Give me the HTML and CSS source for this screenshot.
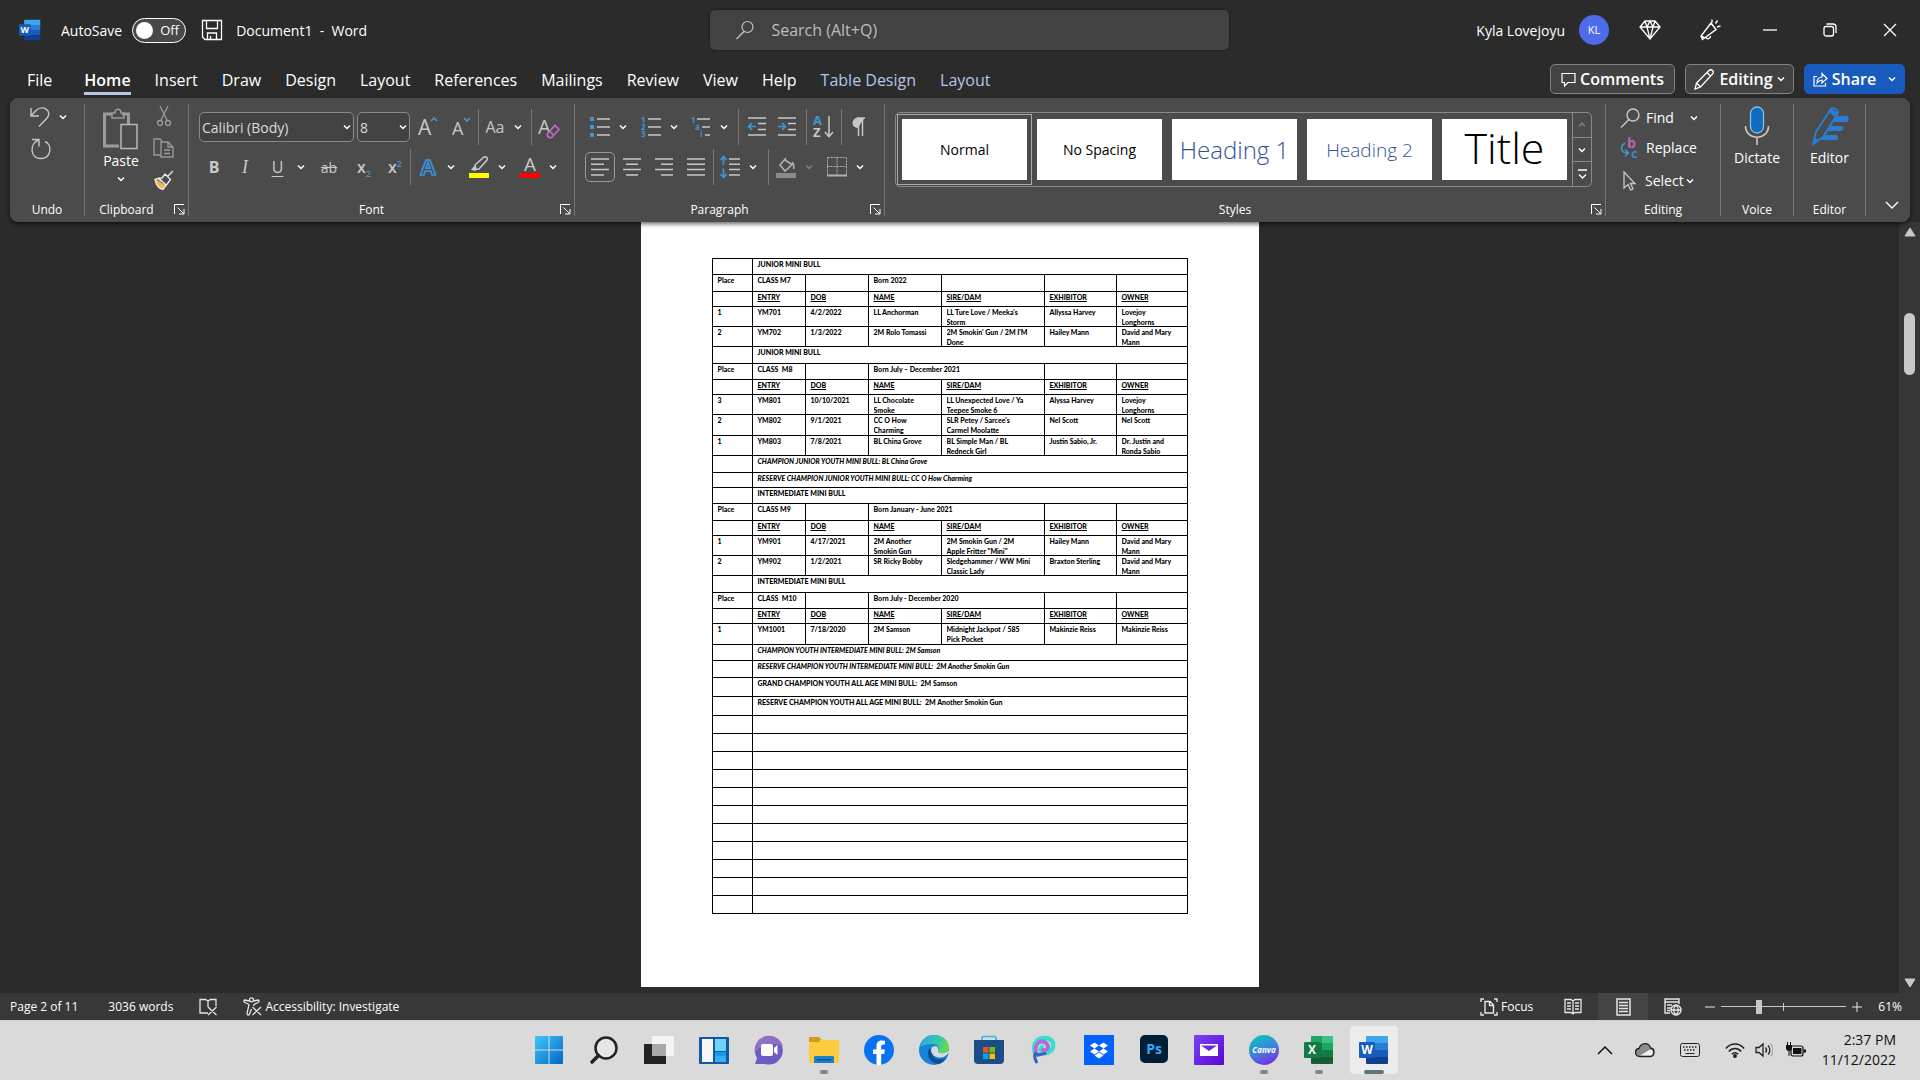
FILE: index.html
```html
<!DOCTYPE html>
<html lang="en">
<head>
    <meta charset="UTF-8">
    <meta name="viewport" content="width=device-width, initial-scale=1.0">
    <title>Document1 - Word</title>
    <link rel="stylesheet" href="styles.css">
</head>
<body>

    <!-- shared icons -->
    <svg class="defs" width="0" height="0" aria-hidden="true">
        <symbol id="chev" viewBox="0 0 8 8"><path d="M1 2.5l3 3 3-3" fill="none" stroke="currentColor" stroke-width="1.5"/></symbol>
        <symbol id="launch" viewBox="0 0 11 11"><path d="M.5 10V.5H10M3.5 3.5l6 6M10 5v5H5" fill="none" stroke="currentColor"/></symbol>
        <symbol id="wordlogo" viewBox="0 0 30 30">
            <path d="M8 1h20a1 1 0 0 1 1 1v7H7V2a1 1 0 0 1 1-1z" fill="#41a5ee"/>
            <path d="M7 8h22v7H7z" fill="#2b7cd3"/>
            <path d="M7 15h22v7H7z" fill="#185abd"/>
            <path d="M7 22h22v6a1 1 0 0 1-1 1H8a1 1 0 0 1-1-1z" fill="#103f91"/>
            <rect y="7" width="16" height="16" rx="1" fill="#185abd"/>
            <text x="8" y="19" text-anchor="middle" font-size="12" font-weight="bold" fill="#fff">W</text>
        </symbol>
    </svg>

    <header class="titlebar">
        <div class="title-left">
            <svg class="app-icon" width="22" height="22"><use href="#wordlogo"/></svg>
            <label for="autosave">AutoSave</label>
            <span class="toggle">
                <input type="checkbox" id="autosave">
                <span class="toggle-text">Off</span>
            </span>
            <button class="plain save" aria-label="Save">
                <svg width="22" height="22" viewBox="0 0 22 22" fill="none" stroke="#fff" stroke-width="1.300"><path d="M1.500 1.500h19v19H4l-2.500-2.500zM5.500 1.500v8h11v-8M6.500 20.500v-6.500h9v6.500M9.500 20v-3"/></svg>
            </button>
            <span class="doc-name">Document1&nbsp; -&nbsp; Word</span>
        </div>
        <label class="search">
            <svg width="18" height="20" viewBox="0 0 18 20" fill="none" stroke="#c4c4c4" stroke-width="1.200"><circle cx="11.500" cy="7" r="5.500"/><path d="M8 11.500L.5 19"/></svg>
            <input type="search" placeholder="Search (Alt+Q)" aria-label="Search">
        </label>
        <div class="title-right">
            <span class="user">Kyla Lovejoyu</span>
            <span class="avatar">KL</span>
            <button class="win" aria-label="Premium"><svg width="22" height="20" viewBox="0 0 22 20" fill="none" stroke="#fff" stroke-width="1.300"><path d="M6 1h10l5 6-10 12L1 7zM1 7h20M6 1l2 6 3 12 3-12 2-6M8 7l3-6 3 6"/></svg></button>
            <button class="win" aria-label="What's new"><svg width="22" height="22" viewBox="0 0 22 22" fill="none" stroke="#fff" stroke-width="1.400"><path d="M12 4L2 17l1.500 3.500L17 10.500zM2 17l4 2M7 18.500c1 2 4.500 1.500 4.500-1.500M13 3.500V.5M16.500 4.500l2-3M18 8l3.500-1"/></svg></button>
            <button class="win" aria-label="Minimize"><svg width="14" height="14"><path d="M0 7h14" stroke="#fff" stroke-width="1.300"/></svg></button>
            <button class="win" aria-label="Restore"><svg width="14" height="14" viewBox="0 0 14 14" fill="none" stroke="#fff" stroke-width="1.300"><rect x="1" y="3.500" width="9.500" height="9.500" rx="2"/><path d="M3.500 1h6.500a3 3 0 0 1 3 3v6"/></svg></button>
            <button class="win" aria-label="Close"><svg width="14" height="14"><path d="M1 1l12 12M13 1L1 13" stroke="#fff" stroke-width="1.300"/></svg></button>
        </div>
    </header>

    <nav class="tabs">
        <a href="#file" class="file">File</a>
        <a href="#home" class="active">Home</a>
        <a href="#insert">Insert</a>
        <a href="#draw">Draw</a>
        <a href="#design">Design</a>
        <a href="#layout">Layout</a>
        <a href="#references">References</a>
        <a href="#mailings">Mailings</a>
        <a href="#review">Review</a>
        <a href="#view">View</a>
        <a href="#help">Help</a>
        <a href="#table-design" class="context">Table Design</a>
        <a href="#table-layout" class="context">Layout</a>
        <div class="tab-buttons">
            <button class="tab-btn comments"><svg width="15" height="15" viewBox="0 0 15 15" fill="none" stroke="#fff" stroke-width="1.200"><path d="M1 1.500h13v9H7L3.500 14v-3.500H1z"/></svg>Comments</button>
            <button class="tab-btn editing"><svg width="21" height="21" viewBox="0 0 21 21" fill="none" stroke="#fff" stroke-width="1.300"><path d="M1 20l1.500-6L15 1.500c1-1 2.500-1 3.500 0s1 2.500 0 3.500L6.500 18zM13 3.500l4 4M2.500 14l4 4"/></svg>Editing<svg width="8" height="8"><use href="#chev"/></svg></button>
            <button class="tab-btn share"><svg width="15" height="15" viewBox="0 0 15 15" fill="none" stroke="#fff" stroke-width="1.200"><path d="M4 4.500H1v9.500h11.500V11M4 11c0-4 2-6 5-6V1.500l5 5-5 4.500V8C7 8 5.500 9 4 11z"/></svg>Share<svg class="share-chev" width="8" height="8"><use href="#chev"/></svg></button>
        </div>
    </nav>

    <section class="ribbon">
        <div class="group undo-group">
            <div class="group-body undo-body">
                <button class="split" aria-label="Undo"><svg width="20" height="20" viewBox="0 0 20 20" fill="none" stroke="#c8c8c8" stroke-width="1.400"><path d="M1 1v8h8M1.500 8.500L6 3.500c7-6 16 0 11.500 7L9 19.500"/></svg><svg width="8" height="8"><use href="#chev"/></svg></button>
                <button class="ib" aria-label="Redo"><svg width="22" height="22" viewBox="0 0 22 22" fill="none" stroke="#c8c8c8" stroke-width="1.400"><path d="M2 1.500h7v7M8.500 2C-1 6 0 20.500 11 20.500c10 0 12-13.500 4-17"/></svg></button>
            </div>
            <div class="group-label"><span>Undo</span></div>
        </div>

        <div class="group clip-group">
            <div class="group-body clip-body">
                <button class="paste">
                    <svg width="36" height="42" viewBox="0 0 36 42" fill="none" stroke="#9b9b9b" stroke-width="2"><path d="M9 6H1.500v32H16M19 6h6.500v10" stroke-width="3"/><path d="M9 10V5h3c0-5 6-5 6 0h3v5z" stroke-width="1.500"/><path d="M18 16.500h16v24H18z" stroke="#b8b8b8" stroke-width="1.500"/></svg>
                    Paste
                    <svg width="8" height="8"><use href="#chev"/></svg>
                </button>
                <div class="clip-side">
                    <button class="ib" aria-label="Cut"><svg width="16" height="22" viewBox="0 0 16 22" fill="none" stroke="#9b9b9b" stroke-width="1.300"><path d="M4 1l7.500 15M12 1L4.500 16"/><circle cx="4" cy="18" r="2.500"/><circle cx="12" cy="18" r="2.500"/></svg></button>
                    <button class="ib" aria-label="Copy"><svg width="21" height="20" viewBox="0 0 21 20" fill="none" stroke="#9b9b9b" stroke-width="1.300"><path d="M8 17H1V1h6l2 2M8 4h7l5 5v10H8zM15 4v5h5M11 12h6M11 15.500h6"/></svg></button>
                    <button class="ib" aria-label="Format Painter"><svg width="20" height="20" viewBox="0 0 20 20" fill="none"><path d="M2 9l10 7-3 3.500C5 18 2 14 1 10z" fill="#f0b64e"/><path d="M19 1l-6 6M11 4l5.500 5.500-4 5.500L4 8.500 8 8zM1 9.500l4-1.500 7 7.500-3 4C5 18.500 2 14 1 9.500z" stroke="#e6e6e6" stroke-width="1.400"/></svg></button>
                </div>
            </div>
            <div class="group-label"><span>Clipboard</span><button class="plain launcher" aria-label="Clipboard options"><svg width="11" height="11"><use href="#launch"/></svg></button></div>
        </div>

        <div class="group font-group">
            <div class="group-body rows">
                <div class="tool-row font-top">
                    <span class="combo"><select aria-label="Font"><option>Calibri (Body)</option></select><svg width="8" height="8"><use href="#chev"/></svg></span>
                    <span class="combo"><select aria-label="Font size"><option>8</option></select><svg width="8" height="8"><use href="#chev"/></svg></span>
                    <button class="ib" aria-label="Grow font"><svg width="20" height="24" viewBox="0 0 20 24"><text x="0" y="20" font-size="21" fill="#c8c8c8">A</text><path d="M13 6l3-3 3 3" fill="none" stroke="#4a9ad4" stroke-width="1.500"/></svg></button>
                    <button class="ib" aria-label="Shrink font"><svg width="18" height="24" viewBox="0 0 18 24"><text x="0" y="20" font-size="18" fill="#c8c8c8">A</text><path d="M12 3l3 3 3-3" fill="none" stroke="#4a9ad4" stroke-width="1.500"/></svg></button>
                    <i class="sep"></i>
                    <button class="split" aria-label="Change case"><span class="glyph w20">Aa</span><svg width="8" height="8"><use href="#chev"/></svg></button>
                    <i class="sep"></i>
                    <button class="ib" aria-label="Clear formatting"><svg width="22" height="26" viewBox="0 0 22 26"><text x="0" y="20" font-size="20" fill="#c8c8c8">A</text><path d="M9.500 19.500l7.500-8 4 4-7.500 8c-2 1-5-1.500-4-4zM11.500 17l4 4" fill="#4b4b4b" stroke="#c669c6" stroke-width="1.600"/></svg></button>
                </div>
                <div class="tool-row font-bottom">
                    <button class="ib glyph bold">B</button>
                    <button class="ib glyph ital">I</button>
                    <button class="split"><span class="glyph under w20">U</span><svg width="8" height="8"><use href="#chev"/></svg></button>
                    <button class="ib glyph strike">ab</button>
                    <button class="ib glyph script">x<sub>2</sub></button>
                    <button class="ib glyph script">x<sup>2</sup></button>
                    <i class="sep"></i>
                    <button class="split" aria-label="Text effects"><svg width="20" height="24" viewBox="0 0 20 24"><text x="10" y="20" text-anchor="middle" font-size="22" font-weight="bold" fill="#4b4b4b" stroke="#3d8fd6" stroke-width="1.700">A</text></svg><svg width="8" height="8"><use href="#chev"/></svg></button>
                    <button class="split" aria-label="Highlight"><svg width="20" height="22" viewBox="0 0 20 22"><path d="M2 14l3-4 3 3-2 2z" fill="#c8c8c8"/><path d="M6 9l9-8c2-1 4 1 3 3l-8 9-3 .5z" fill="none" stroke="#c8c8c8" stroke-width="1.500"/><path d="M0 17h20v5H0z" fill="#ff0"/></svg><svg width="8" height="8"><use href="#chev"/></svg></button>
                    <button class="split" aria-label="Font color"><svg width="20" height="22" viewBox="0 0 20 22"><text x="10" y="14.500" text-anchor="middle" font-size="19" fill="#c8c8c8">A</text><path d="M0 17h20v5H0z" fill="#f00"/></svg><svg width="8" height="8"><use href="#chev"/></svg></button>
                </div>
            </div>
            <div class="group-label"><span>Font</span><button class="plain launcher" aria-label="Font options"><svg width="11" height="11"><use href="#launch"/></svg></button></div>
        </div>

        <div class="group para-group">
            <div class="group-body rows">
                <div class="tool-row para-top">
                    <button class="split" aria-label="Bullets"><svg width="20" height="20" viewBox="0 0 20 20"><path d="M0 0h4v4H0zM0 8h4v4H0zM0 16h4v4H0z" fill="#3f97d3"/><path d="M7 2h13M7 10h13M7 18h13" stroke="#c8c8c8" stroke-width="1.500"/></svg><svg width="8" height="8"><use href="#chev"/></svg></button>
                    <button class="split" aria-label="Numbering"><svg width="20" height="20" viewBox="0 0 20 20"><g font-size="8" font-weight="bold" fill="#3f97d3"><text y="6">1</text><text y="13">2</text><text y="20">3</text></g><path d="M7 2h13M7 10h13M7 18h13" stroke="#c8c8c8" stroke-width="1.500"/></svg><svg width="8" height="8"><use href="#chev"/></svg></button>
                    <button class="split" aria-label="Multilevel list"><svg width="20" height="20" viewBox="0 0 20 20"><g font-size="8" font-weight="bold" fill="#3f97d3"><text y="6">1</text><text x="4" y="13">a</text><text x="9" y="20">i</text></g><path d="M6 2h13M11 10h8M14 18h5" stroke="#c8c8c8" stroke-width="1.500"/></svg><svg width="8" height="8"><use href="#chev"/></svg></button>
                    <i class="sep"></i>
                    <button class="ib" aria-label="Decrease indent"><svg width="20" height="20" viewBox="0 0 20 20" fill="none"><path d="M1 1h18M11 6.500h8M11 12.500h8M1 18h18" stroke="#c8c8c8" stroke-width="1.500"/><path d="M9 9.500H1.500M5 6L1.500 9.500 5 13" stroke="#3f97d3" stroke-width="1.600"/></svg></button>
                    <button class="ib" aria-label="Increase indent"><svg width="20" height="20" viewBox="0 0 20 20" fill="none"><path d="M1 1h18M11 6.500h8M11 12.500h8M1 18h18" stroke="#c8c8c8" stroke-width="1.500"/><path d="M1 9.500h7.500M5 6l3.500 3.500L5 13" stroke="#3f97d3" stroke-width="1.600"/></svg></button>
                    <i class="sep"></i>
                    <button class="ib" aria-label="Sort"><svg width="21" height="26" viewBox="0 0 21 26"><text x="0" y="11" font-size="13" font-weight="bold" fill="#3f97d3">A</text><text x="0" y="23" font-size="13" font-weight="bold" fill="#c8c8c8">Z</text><path d="M16 2v20M12 18l4 4.500 4-4.500" fill="none" stroke="#c8c8c8" stroke-width="1.500"/></svg></button>
                    <i class="sep"></i>
                    <button class="ib" aria-label="Show marks"><svg width="14" height="20" viewBox="0 0 14 20"><path d="M13.500 1H6.500a5 5 0 0 0 0 10" fill="#c8c8c8"/><path d="M5.500 1H14M7.500 1v18M11.500 1v18" stroke="#c8c8c8" stroke-width="1.500"/></svg></button>
                </div>
                <div class="tool-row para-bottom">
                    <button class="ib on" aria-label="Align left"><svg width="20" height="20" viewBox="0 0 20 20"><path d="M1 2h18M1 7.300h13M1 12.600h18M1 18h13" stroke="#c8c8c8" stroke-width="1.500"/></svg></button>
                    <button class="ib" aria-label="Center"><svg width="20" height="20" viewBox="0 0 20 20"><path d="M1 2h18M4 7.300h12M1 12.600h18M4 18h12" stroke="#c8c8c8" stroke-width="1.500"/></svg></button>
                    <button class="ib" aria-label="Align right"><svg width="20" height="20" viewBox="0 0 20 20"><path d="M1 2h18M7 7.300h12M1 12.600h18M7 18h12" stroke="#c8c8c8" stroke-width="1.500"/></svg></button>
                    <button class="ib" aria-label="Justify"><svg width="20" height="20" viewBox="0 0 20 20"><path d="M1 2h18M1 7.300h18M1 12.600h18M1 18h18" stroke="#c8c8c8" stroke-width="1.500"/></svg></button>
                    <i class="sep"></i>
                    <button class="split" aria-label="Line spacing"><svg width="20" height="24" viewBox="0 0 20 24" fill="none"><path d="M9 4h11M9 9.300h11M9 14.600h11M9 20h11" stroke="#c8c8c8" stroke-width="1.500"/><path d="M3.500 1.500V10M.5 5l3-3.500 3 3.500M3.500 13.500V22M.5 19l3 3.500 3-3.500" stroke="#3f97d3" stroke-width="1.600"/></svg><svg width="8" height="8"><use href="#chev"/></svg></button>
                    <i class="sep"></i>
                    <button class="split dim" aria-label="Shading"><svg width="20" height="22" viewBox="0 0 20 22"><path d="M10 2L4 9l5 6 7-6.500L9 4M16 6c2 2 2 5 1.500 7" fill="none" stroke="#b0b0b0" stroke-width="1.600"/><path d="M0 17h20v5H0z" fill="#8a8a8a"/></svg><svg width="8" height="8"><use href="#chev"/></svg></button>
                    <button class="split" aria-label="Borders"><svg width="20" height="20" viewBox="0 0 20 20" fill="none" stroke="#b0b0b0"><path d="M.5 .5h19M.5 9.500h19M.5 .5V18M10 .5V18M19.500 .5V18" stroke-dasharray="2 1"/><path d="M0 18.500h20" stroke-width="2"/></svg><svg width="8" height="8"><use href="#chev"/></svg></button>
                </div>
            </div>
            <div class="group-label"><span>Paragraph</span><button class="plain launcher" aria-label="Paragraph options"><svg width="11" height="11"><use href="#launch"/></svg></button></div>
        </div>

        <div class="group styles-group">
            <div class="group-body">
                <div class="gallery">
                    <button class="tile selected">Normal</button>
                    <button class="tile">No Spacing</button>
                    <button class="tile h1">Heading 1</button>
                    <button class="tile h2">Heading 2</button>
                    <button class="tile big">Title</button>
                    <div class="gallery-nav">
                        <button class="plain dim flip" aria-label="Previous styles"><svg width="8" height="8"><use href="#chev"/></svg></button>
                        <button class="plain" aria-label="Next styles"><svg width="8" height="8"><use href="#chev"/></svg></button>
                        <button class="plain" aria-label="More styles"><svg width="9" height="11" viewBox="0 0 9 11" fill="none" stroke="#fff" stroke-width="1.300"><path d="M0 1h9M1 5.500L4.500 9 8 5.500"/></svg></button>
                    </div>
                </div>
            </div>
            <div class="group-label"><span>Styles</span><button class="plain launcher" aria-label="Styles options"><svg width="11" height="11"><use href="#launch"/></svg></button></div>
        </div>

        <div class="group edit-group">
            <div class="group-body edit-body">
                <button class="edit-btn find"><svg width="20" height="20" viewBox="0 0 20 20" fill="none" stroke="#c8c8c8" stroke-width="1.400"><circle cx="13" cy="7" r="6"/><path d="M9 11.500L1 19.500"/></svg>Find<svg width="8" height="8"><use href="#chev"/></svg></button>
                <button class="edit-btn"><svg width="20" height="24" viewBox="0 0 20 24"><text x="7" y="12" font-size="14" font-weight="bold" fill="#b565b5">b</text><text x="11" y="22" font-size="13" font-weight="bold" fill="#3f86c0">c</text><path d="M5 7C0 10 0 17 8 17M5 13.500l3.500 3.500L5 20.500" fill="none" stroke="#3f97d3" stroke-width="1.600"/></svg>Replace</button>
                <button class="edit-btn select"><svg width="20" height="20" viewBox="0 0 20 20" fill="none" stroke="#c8c8c8" stroke-width="1.300"><path d="M4 1v16l4-3.500 2.500 5.500 2.500-1-2.500-5.500H15z"/></svg>Select<svg width="8" height="8"><use href="#chev"/></svg></button>
            </div>
            <div class="group-label"><span>Editing</span></div>
        </div>

        <div class="group voice-group">
            <div class="group-body">
                <button class="big-btn"><svg width="26" height="40" viewBox="0 0 26 40" fill="none"><rect x="6.500" y="1" width="13" height="26" rx="6.500" fill="#0f6cbd" stroke="#83bfee" stroke-width="1.300"/><path d="M1.500 20c0 15 23 15 23 0M13 32v7" stroke="#d0c8c0" stroke-width="1.600"/></svg>Dictate</button>
            </div>
            <div class="group-label"><span>Voice</span></div>
        </div>

        <div class="group editor-group">
            <div class="group-body">
                <button class="big-btn"><svg width="38" height="40" viewBox="0 0 38 40" fill="none"><path d="M22 10h13.500c3 0 3 6 0 6H19zM18 20h12c3 0 3 5 0 5H14zM13 29h12c3 0 3 5 0 5H6z" fill="#2b7cd3"/><path d="M2 38l3-12L20 3c2-2 8 1 7 4L12 31z" fill="#4b4b4b" stroke="#2b7cd3" stroke-width="2"/><path d="M18 6l6 5 3-4-7-4zM2 38l1.500-7 4 4z" fill="#2b7cd3"/></svg>Editor</button>
            </div>
            <div class="group-label"><span>Editor</span></div>
        </div>

        <button class="plain collapse" aria-label="Collapse ribbon"><svg width="14" height="14" viewBox="0 0 14 14"><path d="M1 4l6 6 6-6" fill="none" stroke="#fff" stroke-width="1.400"/></svg></button>
    </section>

    <main class="workspace">
        <div class="canvas">
            <article class="page">
                <table class="results">
                    <colgroup><col class="c-place"><col class="c-entry"><col class="c-dob"><col class="c-name"><col class="c-sire"><col class="c-exhibitor"><col class="c-owner"></colgroup>
                    <tbody>
                        <tr class="champ"><td></td><td colspan="6">JUNIOR MINI BULL</td></tr>
                        <tr class="class"><td>Place</td><td>CLASS M7</td><td></td><td>Born 2022</td><td></td><td></td><td></td></tr>
                        <tr class="cols"><td></td><th>ENTRY</th><th>DOB</th><th>NAME</th><th>SIRE/DAM</th><th>EXHIBITOR</th><th>OWNER</th></tr>
                        <tr class="entry"><td>1</td><td>YM701</td><td>4/2/2022</td><td>LL Anchorman</td><td><div>LL Ture Love / Meeka's<br>Storm</div></td><td>Allyssa Harvey</td><td><div>Lovejoy<br>Longhorns</div></td></tr>
                        <tr class="entry"><td>2</td><td>YM702</td><td>1/3/2022</td><td>2M Rolo Tomassi</td><td><div>2M Smokin' Gun / 2M I'M<br>Done</div></td><td>Hailey Mann</td><td><div>David and Mary<br>Mann</div></td></tr>
                        <tr class="class"><td></td><td colspan="6">JUNIOR MINI BULL</td></tr>
                        <tr class="champ"><td>Place</td><td>CLASS&nbsp; M8</td><td></td><td colspan="2">Born July – December 2021</td><td></td><td></td></tr>
                        <tr class="cols"><td></td><th>ENTRY</th><th>DOB</th><th>NAME</th><th>SIRE/DAM</th><th>EXHIBITOR</th><th>OWNER</th></tr>
                        <tr class="entry"><td>3</td><td>YM801</td><td>10/10/2021</td><td><div>LL Chocolate<br>Smoke</div></td><td><div>LL Unexpected Love / Ya<br>Teepee Smoke 6</div></td><td>Alyssa Harvey</td><td><div>Lovejoy<br>Longhorns</div></td></tr>
                        <tr class="entry tall"><td>2</td><td>YM802</td><td>9/1/2021</td><td><div>CC O How<br>Charming</div></td><td><div>SLR Petey / Sarcee's<br>Carmel Moolatte</div></td><td>Nel Scott</td><td>Nel Scott</td></tr>
                        <tr class="entry"><td>1</td><td>YM803</td><td>7/8/2021</td><td>BL China Grove</td><td><div>BL Simple Man / BL<br>Redneck Girl</div></td><td>Justin Sabio, Jr.</td><td><div>Dr. Justin and<br>Ronda Sabio</div></td></tr>
                        <tr class="class italic"><td></td><td colspan="6">CHAMPION JUNIOR YOUTH MINI BULL: BL China Grove</td></tr>
                        <tr class="cols italic"><td></td><td colspan="6">RESERVE CHAMPION JUNIOR YOUTH MINI BULL: CC O How Charming</td></tr>
                        <tr class="champ"><td></td><td colspan="6">INTERMEDIATE MINI BULL</td></tr>
                        <tr class="class"><td>Place</td><td>CLASS M9</td><td></td><td colspan="2">Born January - June 2021</td><td></td><td></td></tr>
                        <tr class="cols"><td></td><th>ENTRY</th><th>DOB</th><th>NAME</th><th>SIRE/DAM</th><th>EXHIBITOR</th><th>OWNER</th></tr>
                        <tr class="entry"><td>1</td><td>YM901</td><td>4/17/2021</td><td><div>2M Another<br>Smokin Gun</div></td><td><div>2M Smokin Gun / 2M<br>Apple Fritter "Mini"</div></td><td>Hailey Mann</td><td><div>David and Mary<br>Mann</div></td></tr>
                        <tr class="entry"><td>2</td><td>YM902</td><td>1/2/2021</td><td>SR Ricky Bobby</td><td><div>Sledgehammer / WW Mini<br>Classic Lady</div></td><td>Braxton Sterling</td><td><div>David and Mary<br>Mann</div></td></tr>
                        <tr class="class"><td></td><td colspan="6">INTERMEDIATE MINI BULL</td></tr>
                        <tr class="champ"><td>Place</td><td>CLASS&nbsp; M10</td><td></td><td colspan="2">Born July - December 2020</td><td></td><td></td></tr>
                        <tr class="cols"><td></td><th>ENTRY</th><th>DOB</th><th>NAME</th><th>SIRE/DAM</th><th>EXHIBITOR</th><th>OWNER</th></tr>
                        <tr class="entry tall"><td>1</td><td>YM1001</td><td>7/18/2020</td><td>2M Samson</td><td><div>Midnight Jackpot / 585<br>Pick Pocket</div></td><td>Makinzie Reiss</td><td>Makinzie Reiss</td></tr>
                        <tr class="champ italic"><td></td><td colspan="6">CHAMPION YOUTH INTERMEDIATE MINI BULL: 2M Samson</td></tr>
                        <tr class="class italic"><td></td><td colspan="6">RESERVE CHAMPION YOUTH INTERMEDIATE MINI BULL:&nbsp; 2M Another Smokin Gun</td></tr>
                        <tr class="grand"><td></td><td colspan="6">GRAND CHAMPION YOUTH ALL AGE MINI BULL:&nbsp; 2M Samson</td></tr>
                        <tr class="grand"><td></td><td colspan="6">RESERVE CHAMPION YOUTH ALL AGE MINI BULL:&nbsp; 2M Another Smokin Gun</td></tr>
                        <tr class="blank"><td></td><td colspan="6"></td></tr>
                        <tr class="blank"><td></td><td colspan="6"></td></tr>
                        <tr class="blank"><td></td><td colspan="6"></td></tr>
                        <tr class="blank"><td></td><td colspan="6"></td></tr>
                        <tr class="blank"><td></td><td colspan="6"></td></tr>
                        <tr class="blank"><td></td><td colspan="6"></td></tr>
                        <tr class="blank"><td></td><td colspan="6"></td></tr>
                        <tr class="blank"><td></td><td colspan="6"></td></tr>
                        <tr class="blank"><td></td><td colspan="6"></td></tr>
                        <tr class="blank"><td></td><td colspan="6"></td></tr>
                        <tr class="blank"><td></td><td colspan="6"></td></tr>
                    </tbody>
                </table>
            </article>
        </div>
        <div class="scrollbar">
            <svg width="12" height="10"><path d="M6 1l5 8H1z" fill="#c8c8c8" stroke="#c8c8c8"/></svg>
            <div class="thumb"></div>
            <svg width="12" height="10"><path d="M6 9l5-8H1z" fill="#c8c8c8" stroke="#c8c8c8"/></svg>
        </div>
    </main>

    <footer class="status">
        <span>Page 2 of 11</span>
        <span class="words">3036 words</span>
        <button class="plain proof" aria-label="Proofing"><svg width="18" height="18" viewBox="0 0 18 18" fill="none" stroke="#e6e6e6" stroke-width="1.300"><path d="M9 15H1V1.500h5.500L9 3l2.500-1.500H17V8M9 3v6M9 9l8.500 8M17.500 9L9 17"/></svg></button>
        <button class="plain access"><svg width="19" height="19" viewBox="0 0 19 19" fill="none" stroke="#e6e6e6" stroke-width="1.300"><circle cx="8.500" cy="2.800" r="2"/><path d="M6 4L2 3C.5 3 .5 5 2 5.500l4 2-2 9c0 2 2 2 2.500.5L8.500 12M11 4l4-1c1.500 0 1.500 2 0 2.500l-4 2V9M9.500 10l8.500 8M18 10l-8.500 8"/></svg>Accessibility: Investigate</button>
        <button class="plain focus"><svg width="18" height="18" viewBox="0 0 18 18" fill="none" stroke="#e6e6e6" stroke-width="1.400"><path d="M4 1H1v3M14 1h3v3M4 17H1v-3M14 17h3v-3M5 3.500h5l3.500 3.500v8H5zM9.500 4v3.500h4"/></svg>Focus</button>
        <button class="plain view-btn" aria-label="Read mode"><svg width="18" height="17" viewBox="0 0 18 17" fill="none" stroke="#e6e6e6" stroke-width="1.300"><path d="M9 3L7 1.500H1v13h6l2 1.500 2-1.500h6v-13h-6zM9 3v13M3 5h4M3 8h4M3 11h4M11 5h4M11 8h4M11 11h4"/></svg></button>
        <button class="plain view-btn current" aria-label="Print layout"><svg width="15" height="18" viewBox="0 0 15 18" fill="none" stroke="#e6e6e6" stroke-width="1.500"><path d="M1 1h13v16H1zM3 4.500h9M3 7.500h9M3 10.500h9M3 13.500h9"/></svg></button>
        <button class="plain view-btn" aria-label="Web layout"><svg width="18" height="18" viewBox="0 0 18 18" fill="none" stroke="#e6e6e6" stroke-width="1.400"><path d="M6 15H1V1h14v5M1 4h14M3 7h5M3 10h4M3 12.500h3"/><circle cx="12" cy="12" r="5" fill="#383838"/><path d="M7 12h10M12 7c-3 3-3 7 0 10M12 7c3 3 3 7 0 10"/></svg></button>
        <button class="plain zoom-out" aria-label="Zoom out"><svg width="10" height="10"><path d="M0 5h10" stroke="#e6e6e6"/></svg></button>
        <input class="zoom" type="range" min="0" max="100" value="29" aria-label="Zoom">
        <button class="plain zoom-in" aria-label="Zoom in"><svg width="10" height="10"><path d="M0 5h10M5 0v10" stroke="#e6e6e6"/></svg></button>
        <span class="percent">61%</span>
    </footer>

    <div class="taskbar">
        <div></div>
        <div class="apps">
            <button class="app" aria-label="Start"><svg width="30" height="30" viewBox="0 0 30 30"><defs><linearGradient id="win" x1="0" y1="0" x2="1" y2="1"><stop offset="0" stop-color="#3fc8fa"/><stop offset="1" stop-color="#0067c5"/></linearGradient></defs><path d="M1 2a1 1 0 0 1 1-1h12.500v13.500H1zM15.500 1H28a1 1 0 0 1 1 1v12.500H15.500zM1 15.500h13.500V29H2a1 1 0 0 1-1-1zM15.500 15.500H29V28a1 1 0 0 1-1 1H15.500z" fill="url(#win)"/></svg></button>
            <button class="app" aria-label="Search"><svg width="30" height="30" viewBox="0 0 30 30" fill="none" stroke="#222"><circle cx="17" cy="13" r="10.500" fill="#e6e6e6" stroke-width="2.500"/><path d="M9.500 20.500L3 27" stroke-width="3.500" stroke-linecap="round"/></svg></button>
            <button class="app" aria-label="Task view"><svg width="30" height="30" viewBox="0 0 30 30"><path d="M0 9h22v20H0z" fill="#222"/><path d="M8 1h22v20H8z" fill="#fafafa" opacity=".8"/><path d="M8 9h14v12H8z" fill="#a8a8a8"/></svg></button>
            <button class="app" aria-label="Widgets"><svg width="30" height="30" viewBox="0 0 30 30"><rect y="2" width="30" height="27" rx="1" fill="#0f5a9e"/><path d="M3 4h11v23H3z" fill="#f6f6f6"/><path d="M16 4h11v12H16z" fill="#6fd4fb"/><path d="M16 17h11v4H16z" fill="#1d98e8"/><path d="M16 21h11v6H16z" fill="#36aef2"/></svg></button>
            <button class="app" aria-label="Chat"><svg width="30" height="30" viewBox="0 0 30 30"><path d="M1 29l2-6A14 14 0 1 1 11 29z" fill="#6c5bc0"/><path d="M1 18A14 14 0 0 1 29 12c-5-5-22-4-28 6z" fill="#8f70c4"/><rect x="7" y="9" width="12" height="12" rx="2" fill="#fff"/><path d="M20 13l3.500-3v10L20 17z" fill="#fff"/></svg></button>
            <button class="app running" aria-label="File Explorer"><svg width="30" height="30" viewBox="0 0 30 30"><path d="M0 8V3q0-1 1-1h9l3 3h-2v3z" fill="#d59a1c"/><path d="M0 7h10l3-2h17v23H0z" fill="#fccb3e"/><path d="M5 28v-6q0-1 1-1h18q1 0 1 1v6z" fill="#1d7fc8"/><path d="M8 24h14v1.500H8z" fill="#0b5a9c"/></svg></button>
            <button class="app" aria-label="Facebook"><svg width="30" height="30" viewBox="0 0 30 30"><circle cx="15" cy="15" r="15" fill="#0a72f0"/><path d="M12.500 30V19H9v-4.500h3.500V11c0-3.800 2.200-5.500 5.500-5.500l3 .3v3.800h-1.800c-1.500 0-2 .8-2 2v2.900h3.700l-.7 4.500h-3V30z" fill="#fff"/></svg></button>
            <button class="app" aria-label="Edge"><svg width="30" height="30" viewBox="0 0 30 30"><defs><linearGradient id="edge" x1="0" y1=".3" x2="1" y2=".6"><stop offset="0" stop-color="#2aa8e8"/><stop offset=".6" stop-color="#34c9a8"/><stop offset="1" stop-color="#6be04a"/></linearGradient></defs><circle cx="15" cy="15" r="15" fill="#1683d8"/><path d="M.5 12C3 4 8 0 15 0c10 0 15 7 15 12 0 6-7 8-11 5 3-5-1-8-5-8-5 0-11 1-13.500 3z" fill="url(#edge)"/><path d="M11 13c-5 6 0 16 9 16 4-1.500 6-4 7.500-6-6 3-14 1-15-6z" fill="#104e95"/><path d="M13 12c-3 5 2 11 8 10.500q4 0 6-2l3-2.500V15c-3 4-8 4-11 2 1-2 .5-5-2-6z" fill="#dadada"/></svg></button>
            <button class="app" aria-label="Store"><svg width="30" height="30" viewBox="0 0 30 30"><path d="M8 6V3q0-1.500 1.500-1.500h11Q22 1.500 22 3v3" fill="none" stroke="#35b5ea" stroke-width="1.600"/><path d="M0 5h30v20q0 4-4 4H4q-4 0-4-4z" fill="#1b4e87"/><path d="M9 12h5.500v5.500H9z" fill="#f25022"/><path d="M15.500 12H21v5.500h-5.500z" fill="#7fba00"/><path d="M9 18.500h5.500V24H9z" fill="#00a4ef"/><path d="M15.500 18.500H21V24h-5.500z" fill="#ffb900"/></svg></button>
            <button class="app" aria-label="PicsArt"><svg width="30" height="30" viewBox="0 0 30 30" fill="none" stroke-linecap="round"><path d="M7 20C2 9 8 3 16 3c12 0 10 15 0 15-4 0-6-3-3-6" stroke="#35e0c8" stroke-width="4.500"/><path d="M7 19C5 8 12 4 17 8c4 4 1 8-3 7" stroke="#b06ae0" stroke-width="4"/><path d="M7.500 27C4 20 6 16 9 20l7-1.500" stroke="#3a62b8" stroke-width="3"/></svg></button>
            <button class="app" aria-label="Dropbox"><svg width="30" height="30" viewBox="0 0 30 30"><path d="M0 0h30v30H0z" fill="#0061fe"/><path d="M10.500 7.500l4.500 3-4.500 3-4.500-3zM19.500 7.500l4.500 3-4.500 3-4.500-3zM10.500 13.500l4.500 3-4.500 3-4.500-3zM19.500 13.500l4.500 3-4.500 3-4.500-3zM15 17.500l4.500 3-4.500 3-4.500-3z" fill="#fff"/></svg></button>
            <button class="app" aria-label="Photoshop"><svg width="30" height="30" viewBox="0 0 30 30"><rect x="1" width="28" height="28" rx="5" fill="#001e36"/><text x="15" y="19" text-anchor="middle" font-size="14" font-weight="bold" fill="#31a8ff">Ps</text></svg></button>
            <button class="app" aria-label="Mail"><svg width="30" height="30" viewBox="0 0 30 30"><defs><linearGradient id="mail" x1="0" y1="0" x2="1" y2="1"><stop offset="0" stop-color="#7b45f0"/><stop offset="1" stop-color="#5a05d0"/></linearGradient></defs><rect width="30" height="30" rx="1" fill="url(#mail)"/><path d="M6 9h18v12H6z" fill="#fff"/><path d="M7 10.500h16l-8 5.500z" fill="#6a2ae0"/></svg></button>
            <button class="app running" aria-label="Canva"><svg width="30" height="30" viewBox="0 0 30 30"><defs><linearGradient id="canva" x1=".3" y1="0" x2=".7" y2="1"><stop offset="0" stop-color="#0cc0c4"/><stop offset=".5" stop-color="#3f83d8"/><stop offset="1" stop-color="#7a2ae8"/></linearGradient></defs><circle cx="15" cy="15" r="15" fill="url(#canva)"/><text x="15" y="18" text-anchor="middle" font-size="8" font-weight="bold" font-style="italic" fill="#fff">Canva</text></svg></button>
            <button class="app running" aria-label="Excel"><svg width="30" height="30" viewBox="0 0 30 30"><path d="M7 2q0-1 1-1h10v7H7z" fill="#21a366"/><path d="M18 1h10q1 0 1 1v6H18z" fill="#33c481"/><path d="M7 8h11v7H7z" fill="#107c41"/><path d="M18 8h11v7H18z" fill="#21a366"/><path d="M7 15h22v7H7z" fill="#107c41"/><path d="M7 22h22v6q0 1-1 1H8q-1 0-1-1z" fill="#185c37"/><rect y="7" width="16" height="16" rx="1" fill="#107c41"/><text x="8" y="19" text-anchor="middle" font-size="12" font-weight="bold" fill="#fff">X</text></svg></button>
            <button class="app running front" aria-label="Word"><svg width="30" height="30"><use href="#wordlogo"/></svg></button>
        </div>
        <div class="tray">
            <button class="plain up" aria-label="Hidden icons"><svg width="16" height="10"><path d="M1 9l7-7 7 7" fill="none" stroke="#111" stroke-width="1.500"/></svg></button>
            <svg width="20" height="16" viewBox="0 0 20 16"><path d="M5 14.500C-1 14.500-.5 7 4 6.500 6 0 14 0 15.500 6c5 .5 4.500 8.500-.5 8.500z" fill="#8b8b8b" stroke="#222" stroke-width="1.300"/><path d="M5 13.500l10-6c3.500 0 4 6 0 6z" fill="#f0f0f0"/></svg>
            <svg class="keyboard" width="20" height="14" viewBox="0 0 20 14" fill="none" stroke="#222"><rect x=".5" y=".5" width="19" height="13" rx="2"/><path d="M3 4h14M4 7h12" stroke-width="1.500" stroke-dasharray="1.500 1.500"/><path d="M5.500 10.500h9"/></svg>
            <svg class="wifi" width="20" height="16" viewBox="0 0 20 16" fill="none" stroke="#222" stroke-width="1.500"><path d="M.8 6.500c5-6 13.400-6 18.400 0M3.800 9.500c3.500-4 8.900-4 12.400 0M6.800 12.200c1.800-2 4.600-2 6.400 0"/><circle cx="10" cy="14" r="1.200" fill="#222"/></svg>
            <svg width="18" height="16" viewBox="0 0 18 16" fill="none" stroke="#222" stroke-width="1.300"><path d="M1 5.500h3L8 2v12l-4-3.500H1zM10.500 5.500c1.300 1.500 1.300 3.500 0 5M13 3.500c2.500 2.500 2.500 6.500 0 9"/><path d="M15.500 1.500c3 3.500 3 9.500 0 13" stroke="#aaa"/></svg>
            <svg class="battery" width="20" height="16" viewBox="0 0 20 16"><rect x="5" y="4" width="12" height="10" rx="2" fill="none" stroke="#111" stroke-width="1.200"/><path d="M7 6h8.500v6H7zM17.500 7.500H20v3h-2.500zM0 3h6v3q0 3-3 3T0 6zM1 0h1v3H1zM4 0h1v3H4zM2.500 8.500h1V14h-1z" fill="#111"/></svg>
            <time class="clock">2:37 PM<br>11/12/2022</time>
        </div>
    </div>

</body>
</html>
```

FILE: styles.css
```css
* {
    box-sizing: border-box;
}
body {
    margin: 0;
    height: 100vh;
    display: flex;
    flex-direction: column;
    overflow: hidden;
    background-color: #2b2b2b;
    color: #fff;
    font-family: "Open Sans", "Noto Sans", sans-serif;
    font-size: 14px;
}
.defs {
    position: absolute;
}
button, input, select {
    font-family: inherit;
    font-size: inherit;
    color: inherit;
}
button {
    background: none;
    border: none;
    padding: 0;
    cursor: pointer;
}
svg {
    display: block;
    flex-shrink: 0;
}
.plain {
    display: flex;
    align-items: center;
}

/* title bar */
.titlebar {
    display: grid;
    grid-template-columns: 37fr 27fr 36fr;
    align-items: center;
    height: 60px;
    flex-shrink: 0;
}
.title-left {
    display: flex;
    align-items: center;
    padding-left: 19px;
}
.app-icon {
    margin-right: 20px;
}
.toggle {
    display: grid;
    align-items: center;
    margin-left: 10px;
}
.toggle input {
    grid-area: 1 / 1;
    appearance: none;
    margin: 0;
    width: 54px;
    height: 25px;
    border: 1px solid #fff;
    border-radius: 13px;
    background-color: #484848;
    padding: 3px;
}
.toggle input::before {
    content: "";
    display: block;
    width: 17px;
    height: 17px;
    border-radius: 50%;
    background-color: #fff;
}
.toggle-text {
    grid-area: 1 / 1;
    padding-left: 28px;
    font-size: 13px;
    pointer-events: none;
}
.save {
    margin: 0 13px 0 15px;
}
.search {
    display: flex;
    align-items: center;
    height: 40px;
    padding-left: 26px;
    gap: 15px;
    border-radius: 5px;
    background-color: #424242;
    box-shadow: 0 0 2px #111;
}
.search input {
    flex: 1;
    border: none;
    outline: none;
    background: none;
    font-size: 16px;
}
.search input::placeholder {
    color: #bdbdbd;
}
.title-right {
    display: flex;
    align-items: center;
    justify-content: flex-end;
}
.avatar {
    width: 30px;
    height: 30px;
    margin: 0 11px 0 14px;
    border-radius: 50%;
    background-color: #4f6bed;
    font-size: 11px;
    line-height: 30px;
    text-align: center;
}
.win {
    display: grid;
    place-items: center;
    width: 60px;
    height: 40px;
}

/* tabs */
.tabs {
    display: flex;
    align-items: center;
    gap: 24px;
    height: 38px;
    flex-shrink: 0;
    padding: 0 15px 0 27px;
    font-size: 16px;
}
.tabs a {
    height: 32px;
    line-height: 34px;
    color: #fff;
    text-decoration: none;
    white-space: nowrap;
}
.tabs .file {
    margin-right: 8px;
}
.tabs .active {
    font-weight: 600;
    border-bottom: 3px solid #b4c6ea;
}
.tabs .context {
    color: #b4c6ea;
}
.tab-buttons {
    display: flex;
    gap: 10px;
    margin-left: auto;
}
.tab-btn {
    display: flex;
    align-items: center;
    justify-content: center;
    gap: 4px;
    height: 30px;
    border: 1px solid #828282;
    border-radius: 5px;
    background-color: #424242;
    font-weight: 600;
}
.comments {
    width: 125px;
}
.editing {
    width: 109px;
}
.share {
    width: 101px;
    border-color: #185abd;
    background-color: #185abd;
}
.share-chev {
    margin-left: 8px;
}

/* ribbon */
.ribbon {
    display: flex;
    position: relative;
    height: 124px;
    flex-shrink: 0;
    margin: 0 10px;
    padding: 6px 0;
    border-radius: 8px;
    background-color: #4b4b4b;
    box-shadow: 0 2px 4px rgba(0, 0, 0, 0.6);
}
.group {
    display: flex;
    flex-direction: column;
    border-right: 1px solid #777;
    flex-shrink: 0;
}
.group-body {
    flex: 1;
}
.group-label {
    display: flex;
    align-items: center;
    height: 14px;
    padding-right: 3px;
    font-size: 12px;
}
.group-label span {
    flex: 1;
    text-align: center;
}
.launcher {
    margin-left: 6px;
}
.ib {
    display: grid;
    place-items: center;
    height: 30px;
}
.ib svg {
    margin: 0 -10px;
}
.on {
    border: 1px solid #9a9a9a;
    border-radius: 5px;
}
.split {
    display: flex;
    align-items: center;
    justify-content: center;
    gap: 9px;
    height: 30px;
}
.dim svg {
    color: #828282;
}
.sep {
    justify-self: center;
    width: 1px;
    height: 36px;
    background-color: #777;
}
.undo-group {
    width: 75px;
}
.undo-body {
    padding-left: 20px;
}
.undo-body .split {
    height: 26px;
}
.undo-body .ib {
    height: 38px;
    margin-left: 10px;
}
.clip-group {
    width: 104px;
}
.clip-body {
    display: flex;
    padding: 4px 0 0 16px;
}
.paste {
    display: flex;
    flex-direction: column;
    align-items: center;
    width: 40px;
    height: 80px;
    gap: 1px;
}
.paste svg:last-child {
    margin-top: 4px;
}
.clip-side {
    flex: 1;
    margin: -8px 2px 0 0;
}
.clip-side .ib {
    width: 100%;
    height: 32px;
}
.rows {
    padding: 3px 0 0 10px;
}
.tool-row {
    display: grid;
    align-items: center;
    height: 40px;
}
.font-group {
    width: 386px;
}
.font-top {
    grid-template-columns: 158px 53px 36px 30px 4px 47px 8px 28px;
}
.font-bottom {
    grid-template-columns: 30px 32px 50px 36px 34px 28px 3px 48px 55px 47px;
}
.combo {
    display: grid;
    align-items: center;
}
.combo:first-child {
    margin-right: 3px;
}
.combo select {
    grid-area: 1 / 1;
    appearance: none;
    height: 30px;
    padding: 0 2px;
    border: 1px solid #8a8a8a;
    border-radius: 5px;
    background-color: #424242;
    color: #dcdcdc;
}
.combo svg {
    grid-area: 1 / 1;
    justify-self: end;
    margin-right: 3px;
    pointer-events: none;
}
.glyph {
    color: #c8c8c8;
    font-size: 16px;
}
.w20 {
    width: 20px;
    text-align: center;
}
.bold {
    font-weight: bold;
}
.ital {
    font-family: "Liberation Serif", serif;
    font-size: 18px;
    font-style: italic;
}
.under {
    text-decoration: underline;
    text-underline-offset: 3px;
}
.strike {
    font-size: 14px;
    text-decoration: line-through;
}
.script {
    display: block;
    font-weight: 600;
    line-height: 20px;
}
.script sub, .script sup {
    color: #3f97d3;
    font-size: 9px;
    line-height: 0;
}
.para-group {
    width: 310px;
}
.para-top {
    grid-template-columns: 46px 56px 44px 15px 22px 37px 2px 33px 2px 32px;
}
.para-bottom {
    grid-template-columns: 30px 34px 30px 33px 2px 48px 12px 41px 61px;
}
.styles-group {
    flex: 1;
}
.gallery {
    display: flex;
    gap: 10px;
    height: 75px;
    margin: 8px 13px 0 10px;
    padding: 6px 0 6px 6px;
    border: 1px solid #8a8a8a;
    border-radius: 5px;
}
.tile {
    flex: 1;
    min-width: 0;
    background-color: #fff;
    color: #000;
}
.tile.selected {
    outline: 1px solid #a8a8a8;
    outline-offset: 4px;
}
.tile.h1 {
    color: #2f5496;
    font-size: 24px;
    font-weight: 300;
}
.tile.h2 {
    color: #2f5496;
    font-size: 19px;
    font-weight: 300;
}
.tile.big {
    font-size: 43px;
    font-weight: 300;
    line-height: 50px;
    padding-bottom: 4px;
}
.gallery-nav {
    display: flex;
    flex-direction: column;
    width: 19px;
    margin: -6px 0 -6px -5px;
    border-left: 1px solid #8a8a8a;
}
.gallery-nav button {
    flex: 1;
    justify-content: center;
}
.gallery-nav button + button {
    border-top: 1px solid #8a8a8a;
}
.flip {
    transform: rotate(180deg);
}
.edit-group {
    width: 115px;
}
.edit-btn {
    display: flex;
    align-items: center;
    gap: 6px;
    height: 33px;
    padding-left: 14px;
}
.edit-btn:first-child {
    height: 27px;
}
.find svg:last-child {
    margin-left: 10px;
}
.select {
    gap: 5px;
}
.select svg:last-child {
    margin-left: -3px;
}
.voice-group {
    width: 73px;
}
.editor-group {
    width: 72px;
}
.big-btn {
    display: flex;
    flex-direction: column;
    align-items: center;
    width: 100%;
    padding-top: 2px;
    gap: 2px;
}
.edit-group .group-label, .voice-group .group-label, .editor-group .group-label, .undo-group .group-label {
    padding: 0;
}
.collapse {
    align-self: flex-end;
    width: 44px;
    justify-content: center;
    padding: 0 0 4px 7px;
}

/* document */
.workspace {
    display: flex;
    flex: 1;
    min-height: 0;
}
.canvas {
    flex: 1;
    padding-bottom: 6px;
}
.page {
    width: 618px;
    height: 100%;
    margin: 0 auto;
    padding: 36px 71px 0;
    background-color: #fff;
    color: #000;
}
.results {
    table-layout: fixed;
    width: 475px;
    border-collapse: collapse;
    font-family: Lato, "Open Sans", sans-serif;
    font-size: 7px;
    font-weight: 900;
    line-height: 10px;
}
.results td, .results th {
    padding: 0 0 0 5px;
    border: 1px solid #000;
    font-weight: inherit;
    text-align: left;
    vertical-align: top;
    white-space: nowrap;
}
.results th {
    text-decoration: underline;
}
.c-place { width: 40px; }
.c-entry { width: 53px; }
.c-dob { width: 63px; }
.c-name { width: 73px; }
.c-sire { width: 103px; }
.c-exhibitor { width: 72px; }
.c-owner { width: 71px; }
.champ { height: 16px; }
.class { height: 17px; }
.cols { height: 15px; }
.entry { height: 20px; }
.tall { height: 21px; }
.grand { height: 19px; }
.blank { height: 18px; }
.entry div {
    height: 19px;
    overflow: hidden;
}
.italic {
    font-style: italic;
}
.scrollbar {
    display: flex;
    flex-direction: column;
    align-items: center;
    width: 21px;
    padding: 5px 0;
    background-color: #363636;
}
.thumb {
    width: 11px;
    height: 62px;
    margin: 76px 0 auto;
    border-radius: 6px;
    background-color: #c8c8c8;
}

/* status bar */
.status {
    display: flex;
    align-items: center;
    height: 27px;
    flex-shrink: 0;
    padding: 0 18px 0 10px;
    background-color: #383838;
    font-size: 12px;
}
.words {
    margin: 0 26px 0 30px;
}
.access {
    gap: 3px;
    margin-left: 26px;
}
.focus {
    gap: 3px;
    margin: 0 15px 0 auto;
}
.view-btn {
    width: 50px;
    height: 27px;
    justify-content: center;
}
.current {
    background-color: #444;
}
.zoom-out {
    margin-left: 7px;
}
.zoom {
    appearance: none;
    width: 125px;
    height: 16px;
    margin: 0 6px;
    /* track line with the 100% tick in the middle */
    background: linear-gradient(#c8c8c8, #c8c8c8) center / 100% 1px no-repeat, linear-gradient(#c8c8c8, #c8c8c8) center / 1px 8px no-repeat;
}
.zoom::-webkit-slider-thumb {
    appearance: none;
    width: 6px;
    height: 14px;
    background-color: #c8c8c8;
}
.percent {
    margin-left: 16px;
}

/* taskbar */
.taskbar {
    display: grid;
    grid-template-columns: 1fr auto 1fr;
    align-items: center;
    height: 60px;
    flex-shrink: 0;
    padding-bottom: 1px;
    border-top: 1px solid #d0d0d0;
    background-color: #dadada;
    color: #111;
}
.apps {
    display: flex;
    gap: 7px;
    padding-left: 2px;
}
.app {
    position: relative;
    display: grid;
    place-items: center;
    width: 48px;
    height: 48px;
    border-radius: 4px;
}
.front {
    background-color: #ececec;
}
.running::after {
    content: "";
    position: absolute;
    bottom: 0;
    width: 8px;
    height: 4px;
    border-radius: 2px;
    background-color: #858585;
}
.front::after {
    width: 20px;
    background-color: #5f7580;
}
.tray {
    display: flex;
    align-items: center;
    justify-content: flex-end;
    gap: 10px;
    padding-right: 24px;
}
.up {
    margin-right: 12px;
}
.keyboard {
    margin: 0 15px;
}
.battery {
    margin: 0 6px 0 3px;
}
.clock {
    line-height: 20px;
    text-align: right;
}
```
